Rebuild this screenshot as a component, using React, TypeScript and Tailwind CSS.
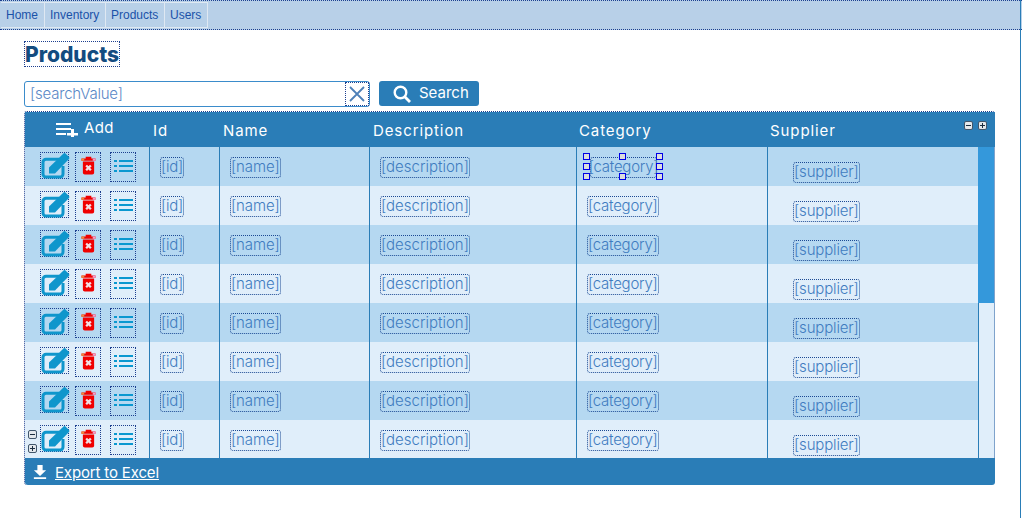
const font = { fontFamily: '"Inter", "Noto Sans", sans-serif' };
const rows = [0, 1, 2, 3, 4, 5, 6, 7];

function EditIcon() {
  return (
    <svg viewBox="0 0 30 28" className="w-[30px] h-[28px] block">
      <path d="M19 7.200H6a3 3 0 0 0-3 3V22a3 3 0 0 0 3 3h14a3 3 0 0 0 3-3v-8" fill="none" stroke="#0f96cc" strokeWidth="3" />
      <path d="M9 21.500V15.500L23.500 1.500a1.500 1.500 0 0 1 2 0l3.500 3.500a1.500 1.500 0 0 1 0 2L15 21.500z" fill="#0f96cc" />
    </svg>
  );
}

function TrashIcon() {
  return (
    <svg viewBox="0 0 16 22" preserveAspectRatio="none" className="w-[15px] h-[19px] block">
      <path d="M5 1h6v2h4.500v2.500H.5V3H5z" fill="#f00000" />
      <path d="M.5 3h3v2.500h-3z" fill="#f08a3c" />
      <path d="M12.500 3h3v2.500h-3z" fill="#f0a0d0" />
      <path d="M2 6.500h12v13a2 2 0 0 1-2 2H4a2 2 0 0 1-2-2z" fill="#f00000" />
      <path d="M5.500 11l5 5.500M10.500 11l-5 5.500" stroke="#f3dfe4" strokeWidth="2.400" />
    </svg>
  );
}

function ListIcon() {
  return (
    <svg viewBox="0 0 19 12" className="w-[19px] h-[12px] block">
      <path d="M0 0h3v2H0zM5 0h14v2H5zM0 5h3v2H0zM5 5h14v2H5zM0 10h3v2H0zM5 10h14v2H5z" fill="#0a98d0" />
    </svg>
  );
}

function Field({ text, children, className = "tracking-[-0.25px]" }: { text: string; children?: React.ReactNode; className?: string }) {
  return (
    <span className={`relative flex justify-center h-[21px] leading-[18px] border border-dotted border-[#1c4a94] rounded-[3px] text-[15px] font-light text-[#3f7cc0] whitespace-nowrap ${className}`}>
      {text}
      {children}
    </span>
  );
}

function Handle({ className }: { className: string }) {
  return <span className={`absolute w-[7px] h-[7px] bg-[#dddddd] border border-[#0000e6] ${className}`} />;
}

function MiniBtn({ plus }: { plus?: boolean }) {
  return (
    <svg viewBox="0 0 9 9" className="w-[9px] h-[9px] block">
      <rect x="0.500" y="0.500" width="8" height="8" rx="1.500" fill="#e4e8ec" stroke="#41566b" />
      <path d={plus ? "M2 4.500h5M4.500 2v5" : "M2 4.500h5"} stroke="#1c2e40" strokeWidth="1" />
    </svg>
  );
}

function Row({ i }: { i: number }) {
  const selected = i === 0;
  const last = i === 7;
  return (
    <div className={`grid grid-cols-[125px_70px_150px_207px_191px_211px] w-fit h-[39px] ${i % 2 === 0 ? "bg-[#b5d8f1]" : "bg-[#e0eefa]"}`}>
      <div className="relative border-r border-[#2a7db7] pl-[15px] pt-[5px] flex items-start">
        {last && (
          <div className="absolute left-[3px] top-[10px] flex flex-col gap-[5px]">
            <MiniBtn />
            <MiniBtn plus />
          </div>
        )}
        <div className="w-[29px] h-[27px] border border-dotted border-[#1c3f8f] relative">
          <div className="absolute -left-[1px] -top-[1px]"><EditIcon /></div>
        </div>
        <div className="ml-[6px] w-[26px] h-[30px] border border-dotted border-[#1c3f8f] flex items-start justify-center pt-[3px]">
          <TrashIcon />
        </div>
        <div className="ml-[9px] w-[26px] h-[30px] border border-dotted border-[#1c3f8f] flex items-start justify-center pt-[7px]">
          <ListIcon />
        </div>
      </div>
      <div className="border-r border-[#2a7db7] pl-[10px] pt-[10px] flex items-start"><Field text="[id]" /></div>
      <div className="border-r border-[#2a7db7] pl-[10px] pt-[10px] flex items-start"><Field text="[name]" className="tracking-[-0.1px]" /></div>
      <div className="border-r border-[#2a7db7] pl-[10px] pt-[10px] flex items-start"><Field text="[description]" className="tracking-[0px]" /></div>
      <div className={`border-r border-[#2a7db7] pt-[10px] flex items-start ${selected ? "pl-[13px]" : "pl-[10px]"}`}>
        {selected ? (
          <Field text="[category]" className="w-[67px] tracking-[-0.25px]">
            <Handle className="left-[-8px] top-[-5px]" />
            <Handle className="left-[28px] top-[-5px]" />
            <Handle className="left-[65px] top-[-5px]" />
            <Handle className="left-[-8px] top-[5px]" />
            <Handle className="left-[65px] top-[5px]" />
            <Handle className="left-[-8px] top-[15px]" />
            <Handle className="left-[28px] top-[15px]" />
            <Handle className="left-[65px] top-[15px]" />
          </Field>
        ) : (
          <Field text="[category]" />
        )}
      </div>
      <div className="border-r border-[#2a7db7] pl-[25px] pt-[15px] flex items-start"><Field text="[supplier]" className="tracking-[-0.15px]" /></div>
    </div>
  );
}

export default function App() {
  return (
    <div className="w-[1022px] h-[518px] bg-white overflow-hidden relative" style={font}>
      <div className="absolute right-[1px] top-0 bottom-0 w-[1px] bg-[#2a7db7]" />
      <div className="h-[30px] bg-[#b8d0e8] border-y border-dotted border-[#1c3f8f] pl-[1px] pt-[1px] flex">
        {[["Home", 44], ["Inventory", 61], ["Products", 59], ["Users", 43]].map(([label, w]) => (
          <a
            key={label as string}
            style={{ width: w as number, fontFamily: '"Liberation Sans", sans-serif' }}
            className="h-[26px] border-r border-y border-[#dfe8f2] text-[12px] text-[#1a52a8] flex items-center pl-[5px]"
          >
            {label}
          </a>
        ))}
      </div>

      <div className="pl-[24px] pr-[27px]">
        <h1 className="mt-[11px] w-fit h-[26px] border border-dotted border-[#1c3f8f] text-[21px] leading-[26px] font-extrabold text-[#134c80]">
          Products
        </h1>

        <div className="mt-[14px] flex items-start">
          <div className="w-[346px] h-[26px] border border-[#3b8ccb] rounded-[3px] flex justify-between text-[15px] font-light tracking-[-0.2px] text-[#5a88c6] leading-[24px] pl-[5px]">
            [searchValue]
            <span className="w-[24px] h-[24px] border border-dotted border-[#1c3f8f] flex items-center justify-center">
              <svg viewBox="0 0 16 16" className="w-[16px] h-[16px]">
                <path d="M1 1l14 14M15 1L1 15" stroke="#4d80b8" strokeWidth="1.800" />
              </svg>
            </span>
          </div>
          <button className="ml-[9px] w-[100px] h-[25px] bg-[#2a7db7] rounded-[3px] text-white text-[15px] flex items-center pl-[14px]">
            <svg viewBox="0 0 18 18" className="w-[18px] h-[18px]">
              <circle cx="7.500" cy="7.500" r="5.800" fill="none" stroke="white" strokeWidth="2.400" />
              <path d="M11.500 11.500L17 17" stroke="white" strokeWidth="2.800" />
            </svg>
            <span className="ml-[8px]">Search</span>
          </button>
        </div>

        <div className="mt-[4px] w-[971px] border-l border-t border-dotted border-[#1c3f8f] rounded-[3px]">
          <div className="relative grid grid-cols-[125px_70px_150px_207px_191px_1fr] h-[35px] bg-[#2a7db7] text-white text-[15px] tracking-[0.9px] leading-[37px]">
            <div className="flex items-start pl-[31px] pt-[8px] leading-[15px]">
              <svg viewBox="0 0 22 15" className="w-[22px] h-[15px] mt-[2px]">
                <path d="M0 1h15v2H0zM0 6h15v2H0zM0 11h10v2H0zM15 7h3v4h4v2.600h-4V15h-3v-1.400h-4V11h4z" fill="white" />
              </svg>
              <span className="ml-[6px] tracking-[0.3px]">Add</span>
            </div>
            <div className="pl-[3px]">Id</div>
            <div className="pl-[3px]">Name</div>
            <div className="pl-[3px]">Description</div>
            <div className="pl-[2px]">Category</div>
            <div className="pl-[2px]">Supplier</div>
            <div className="absolute right-[8px] top-[9px] flex gap-[5px]">
              <MiniBtn />
              <MiniBtn plus />
            </div>
          </div>

          <div className="relative h-[311px] overflow-hidden bg-[#e0eefa] border-r border-[#7fa3cc]">
            {rows.map((i) => <Row key={i} i={i} />)}
            <div className="absolute right-0 top-0 w-[16px] h-[156px] bg-[#3498db]" />
          </div>

          <div className="h-[27px] bg-[#2a7db7] rounded-b-[3px] flex items-center pl-[8px] text-white text-[15px] leading-[24px]">
            <svg viewBox="0 0 16 16" className="w-[14px] h-[16px]">
              <path d="M5 0h6v6h4L8 12.500 1 6h4zM1 14h14v2H1z" fill="white" />
            </svg>
            <span className="ml-[8px] underline tracking-[-0.15px] pt-[2px]">Export to Excel</span>
          </div>
        </div>
      </div>
    </div>
  );
}
